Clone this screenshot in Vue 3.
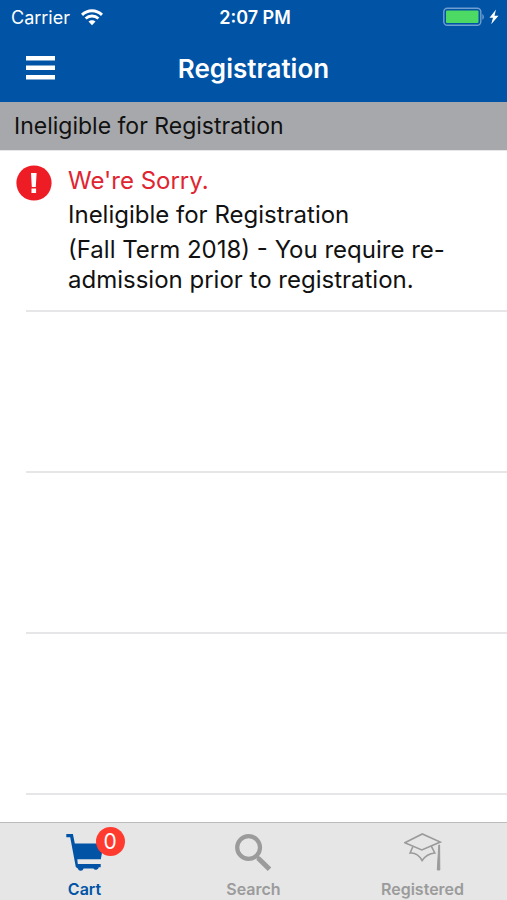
<template>
  <div class="screen">
    <header class="top-bar">
      <!-- Status bar -->
      <div class="status-bar">
        <div class="status-left">
          <span>Carrier</span>
          <svg class="wifi" width="22" height="17" viewBox="0 0 22 17" fill="none" aria-hidden="true">
            <path d="M1 5.8 C6.8 0.3 15.2 0.3 21 5.8" stroke="#fff" stroke-width="3" />
            <path d="M4.6 9.6 C8.3 6.1 13.7 6.1 17.4 9.6" stroke="#fff" stroke-width="2.8" />
            <path d="M7.5 12.6 C9.5 10.7 12.5 10.7 14.5 12.6 L11 16.2 Z" fill="#fff" />
          </svg>
        </div>
        <span class="status-time">2:07 PM</span>
        <div class="status-right">
          <svg width="56" height="20" viewBox="0 0 56 20" aria-hidden="true">
            <rect x="0.8" y="1.3" width="37" height="17" rx="3.5" fill="none" stroke="#6f9fd0" stroke-width="1.4" />
            <rect x="3" y="3.5" width="32.5" height="12.5" rx="1" fill="#4cd964" />
            <path d="M39.3 7 C41.4 7.8 41.4 12 39.3 12.8 Z" fill="#6f9fd0" />
            <path d="M53 2.5 L46.5 10.8 H50 L48.2 17.3 L55.5 8.8 H51.5 Z" fill="#fff" />
          </svg>
        </div>
      </div>

      <!-- Navigation bar -->
      <div class="nav-bar">
        <button class="menu-button" type="button" aria-label="Menu">
          <svg width="29" height="24" viewBox="0 0 29 24" aria-hidden="true">
            <path d="M0 0 H29 V4.5 H0 Z M0 9.5 H29 V14 H0 Z M0 19 H29 V23.5 H0 Z" fill="#fff" />
          </svg>
        </button>
        <h1 class="nav-title">Registration</h1>
      </div>
    </header>

    <h2 class="section-header">Ineligible for Registration</h2>

    <main class="list">
      <div class="row">
        <svg class="alert-icon" width="36" height="36" viewBox="0 0 36 36" aria-hidden="true">
          <circle cx="18" cy="18" r="17.6" fill="#ee1c25" />
          <path d="M15 8 H20.6 L19.8 22 H15.8 Z M15.5 23.6 H20.1 V28 H15.5 Z" fill="#fff" />
        </svg>
        <div class="message">
          <p class="message-title">We're Sorry.</p>
          <p class="message-subtitle">Ineligible for Registration</p>
          <p class="message-body">(Fall Term 2018) - You require re-admission prior to registration.</p>
        </div>
      </div>
      <div v-for="n in emptyRows" :key="n" class="row"></div>
    </main>

    <nav class="tab-bar">
      <button
        v-for="tab in tabs"
        :key="tab.id"
        class="tab"
        :class="{ active: tab.id === activeTab }"
        type="button"
        @click="activeTab = tab.id"
      >
        <span class="tab-icon">
          <svg v-if="tab.id === 'cart'" width="38" height="38" viewBox="0 0 38 38" aria-hidden="true">
            <path d="M0.3 1 H6.9 L8.8 10.6 H37 L35.8 21 L34.8 26.3 H11.3 L11.8 31 H34.7 V34.3 H32.8 A3 3 0 0 1 27.4 35.6 H17.6 A3 3 0 0 1 11.8 35.6 L9.8 34 L4.2 4.2 H0.3 Z" fill="currentColor" />
          </svg>
          <svg v-else-if="tab.id === 'search'" width="38" height="38" viewBox="0 0 38 38" fill="none" stroke="currentColor" aria-hidden="true">
            <circle cx="13.6" cy="14.5" r="11.4" stroke-width="4.2" />
            <path d="M21 22.5 L24 25.5" stroke-width="3" />
            <path d="M23 25 L34.5 36.2" stroke-width="5" />
          </svg>
          <svg v-else width="38" height="38" viewBox="0 0 38 38" fill="none" stroke="currentColor" stroke-width="1.6" aria-hidden="true">
            <path d="M0.8 9.7 L18.3 1 L36.3 9 L17.8 17 Z" />
            <path d="M8.8 13.8 L6.1 20 C10.8 19.5 15.3 22.5 18.1 27.5 C20.8 23.5 25.3 20.5 30.8 20 L27.3 13.2" />
            <path d="M34.8 12 L33.3 37 H35.8 L35.6 12 Z" fill="currentColor" stroke-width="1" />
          </svg>
          <span v-if="tab.badge !== undefined" class="badge">{{ tab.badge }}</span>
        </span>
        <span class="tab-label">{{ tab.label }}</span>
      </button>
    </nav>
  </div>
</template>

<script setup>
import { ref } from 'vue';

const emptyRows = 4;

const tabs = [
  { id: 'cart', label: 'Cart', badge: 0 },
  { id: 'search', label: 'Search' },
  { id: 'registered', label: 'Registered' }
];

const activeTab = ref('cart');
</script>

<style>
body {
  margin: 0;
}
</style>

<style scoped>
.screen {
  display: flex;
  flex-direction: column;
  height: 100vh;
  background: #fff;
  color: #111;
  font-family: Inter, Roboto, "Liberation Sans", sans-serif;
}

.top-bar {
  background: #0053a5;
  color: #fff;
}

.status-bar {
  display: grid;
  grid-template-columns: 1fr auto 1fr;
  align-items: center;
  height: 34px;
  padding: 0 8px 0 11px;
  font-size: 18px;
}

.status-left {
  display: flex;
  align-items: center;
  gap: 11px;
}

.status-time {
  font-weight: 600;
}

.status-right {
  display: flex;
  justify-content: flex-end;
}

.nav-bar {
  display: grid;
  grid-template-columns: 1fr auto 1fr;
  align-items: center;
  height: 68px;
  padding: 0 26px;
}

.menu-button {
  display: flex;
  justify-self: start;
  padding: 0;
  border: 0;
  background: none;
  cursor: pointer;
}

.nav-title {
  margin: 0;
  font-size: 26px;
  font-weight: 600;
}

.section-header {
  margin: 0;
  padding: 0 14px;
  background: #a7a8ab;
  font-size: 23px;
  font-weight: 400;
  line-height: 48px;
}

.list {
  flex: 1;
  min-height: 0;
  overflow: hidden;
  border-top: 1px solid #e6e6e8;
}

.row {
  display: flex;
  gap: 16px;
  box-sizing: border-box;
  min-height: 161px;
  margin-left: 26px;
  border-bottom: 2px solid #e6e6e8;
}

.alert-icon {
  flex: none;
  margin: 14px 0 0 -10px;
}

.message {
  padding: 15px 40px 12px 0;
  font-size: 24px;
}

.message p {
  margin: 0;
  line-height: 30px;
}

.message .message-title {
  margin-bottom: 4px;
  color: #e02430;
}

.message .message-subtitle {
  margin-bottom: 5px;
}

.tab-bar {
  display: grid;
  grid-template-columns: repeat(3, 1fr);
  box-sizing: border-box;
  height: 78px;
  border-top: 1px solid #bcbcbe;
  background: #e6e6e6;
}

.tab {
  display: flex;
  flex-direction: column;
  align-items: center;
  gap: 6px;
  padding: 10px 0 0;
  border: 0;
  background: none;
  color: #9b9b9b;
  font-family: inherit;
  cursor: pointer;
}

.tab.active {
  color: #0053a5;
}

.tab-icon {
  position: relative;
  display: flex;
}

.tab-label {
  font-size: 16px;
  font-weight: 600;
  line-height: 24px;
}

.badge {
  position: absolute;
  top: -6px;
  left: 30px;
  width: 29px;
  border-radius: 50%;
  background: #ff3b30;
  color: #fff;
  font-size: 21px;
  line-height: 29px;
  text-align: center;
}
</style>
